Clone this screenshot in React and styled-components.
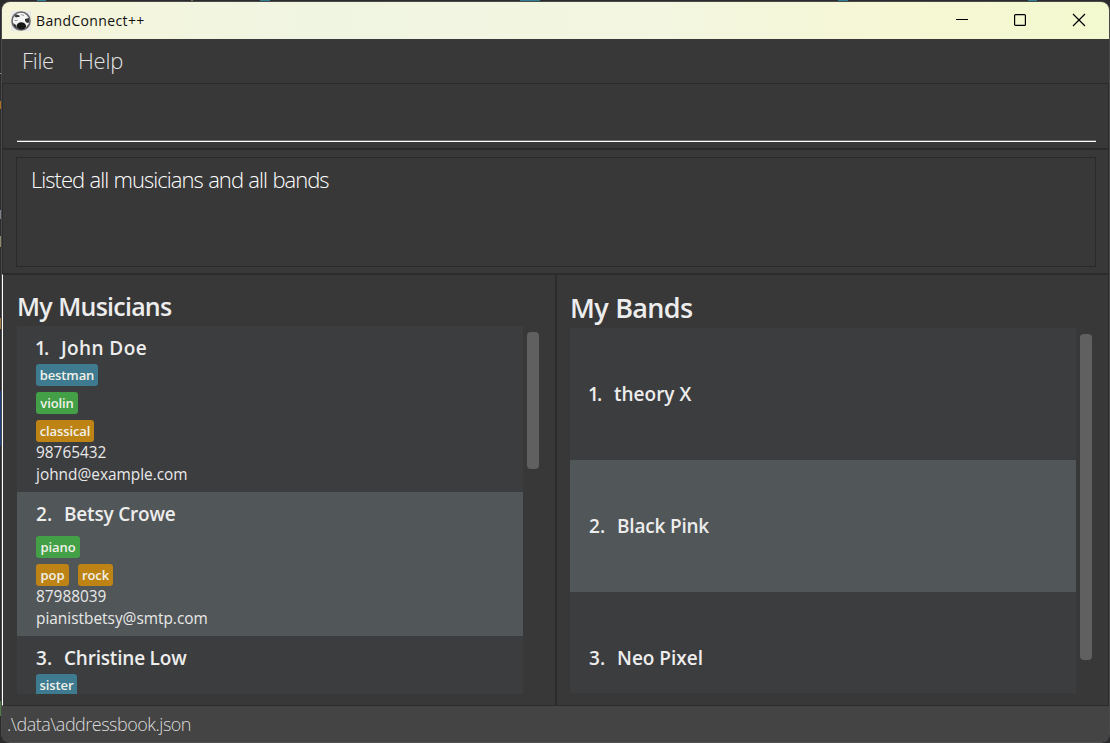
import React from "react";
import styled, { createGlobalStyle } from "styled-components";

const GlobalStyle = createGlobalStyle`
  * { box-sizing: border-box; }
  body { margin: 0; overflow: hidden; background: #2b2b2d; }
`;

const Desktop = styled.div`
  width: 1110px;
  height: 743px;
  padding: 1px 0 0 1px;
  font-family: "Open Sans", "Noto Sans", sans-serif;
  background:
    linear-gradient(#2f7f96, #2f7f96) 37px 0 / 9px 1px no-repeat,
    linear-gradient(#2f7f96, #2f7f96) 260px 0 / 10px 1px no-repeat,
    linear-gradient(#8a6a4c, #8a6a4c) 191px 0 / 2px 1px no-repeat,
    linear-gradient(#2f7f96, #2f7f96) 520px 0 / 20px 1px no-repeat,
    linear-gradient(#2f7f96, #2f7f96) 838px 0 / 10px 1px no-repeat,
    linear-gradient(#2f7f96, #2f7f96) 1028px 0 / 9px 1px no-repeat,
    linear-gradient(#8c97a5, #8c97a5) 0 73px / 2px 1px no-repeat,
    linear-gradient(#a87022, #a87022) 0 101px / 1px 8px no-repeat,
    linear-gradient(#7b8390, #7b8390) 0 210px / 1px 9px no-repeat,
    linear-gradient(#8f8a6a, #8f8a6a) 0 236px / 1px 11px no-repeat,
    linear-gradient(#a07a45, #a07a45) 0 318px / 1px 11px no-repeat,
    linear-gradient(#214283, #214283) 0 391px / 1px 55px no-repeat,
    linear-gradient(#4e7a44, #4e7a44) 0 701px / 1px 15px no-repeat,
    #2b2b2d;
`;

const Window = styled.div`
  width: 1109px;
  height: 742px;
  display: flex;
  flex-direction: column;
  overflow: hidden;
  border: 1px solid #4a4a4a;
  border-bottom-color: #505050;
  border-radius: 9px;
  background: #383838;
`;

const TitleBar = styled.header`
  height: 37px;
  flex: none;
  display: flex;
  align-items: center;
  padding: 0 1px 0 9px;
  background: linear-gradient(90deg, #f6f5da 0%, #f0f5e2 28%, #f3f6e0 60%, #f6f7d4 82%, #f3f9cf 100%);
`;

const AppTitle = styled.h1`
  flex: 1;
  margin: 0 0 0 5px;
  font-size: 14px;
  font-weight: 400;
  letter-spacing: ${(p) => p.$track}px;
  color: #111;
`;

const WindowButton = styled.span`
  width: 58.5px;
  height: 37px;
  padding-bottom: 1px;
  display: flex;
  align-items: center;
  justify-content: center;
`;

const MenuBar = styled.nav`
  height: 44px;
  flex: none;
  display: flex;
  gap: 24px;
  padding-left: 20px;
  line-height: 42px;
  font-size: 22px;
  font-weight: 300;
  color: #e4e4e4;
`;

const MenuItem = styled.span`
  width: ${(p) => p.$width}px;
  white-space: nowrap;
  letter-spacing: ${(p) => p.$track}px;
`;

const CommandArea = styled.section`
  height: 66px;
  flex: none;
  padding: 0 12px 6px 14px;
  display: flex;
  border: 1px solid #2b2b2b;
`;

const CommandInput = styled.div`
  flex: 1;
  border-bottom: 1px solid #fff;
  box-shadow: inset 0 -1px 0 #6c6c6c;
`;

const ResultArea = styled.section`
  height: 125px;
  flex: none;
  display: flex;
  padding: 7px 12px 6px 13px;
  border: 1px solid #2b2b2b;
`;

const ResultBox = styled.div`
  flex: 1;
  border: 1px solid #2a2a2a;
  padding: 6px 14px;
  font-size: 22px;
  line-height: 31px;
  font-weight: 300;
  letter-spacing: ${(p) => p.$track}px;
  word-spacing: 0.6px;
  color: #fff;
`;

const Panels = styled.main`
  flex: 1;
  min-height: 0;
  display: flex;
`;

const Panel = styled.section`
  width: ${(p) => p.$width}px;
  display: flex;
  flex-direction: column;
  border: 1px solid #2b2b2b;
  ${(p) => p.$accent && "border-left-color: #fff;"}
  padding: ${(p) => p.$padding};
`;

const PanelTitle = styled.h2`
  margin: 0;
  flex: none;
  height: ${(p) => p.$height}px;
  line-height: 34px;
  padding-top: ${(p) => p.$top}px;
  font-size: ${(p) => p.$size}px;
  font-weight: 600;
  letter-spacing: ${(p) => p.$track}px;
  word-spacing: 0.8px;
  color: #ededed;
`;

const ListArea = styled.div`
  flex: 1;
  min-height: 0;
  display: flex;
  gap: 3.5px;
`;

const List = styled.ul`
  width: 506px;
  margin: 0;
  padding: 0;
  list-style: none;
  overflow: hidden;
  background: #3c3d3f;
`;

const ScrollThumb = styled.div`
  width: 12.5px;
  height: ${(p) => p.$height}px;
  margin-top: 5.5px;
  border-radius: 4px;
  background: #606060;
`;

const MusicianRow = styled.li`
  height: ${(p) => p.$height}px;
  padding: 8px 0 0 19px;
  background: ${(p) => (p.$alt ? "#515658" : "#3c3d3f")};
  color: #e9e9e9;
`;

const BandRow = styled.li`
  height: 132px;
  display: flex;
  align-items: center;
  padding-left: 19px;
  background: ${(p) => (p.$alt ? "#515658" : "#3c3d3f")};
`;

const Name = styled.div`
  display: flex;
  height: 28px;
  line-height: 28px;
  font-size: 19px;
  font-weight: 600;
  letter-spacing: ${(p) => p.$track ?? 0}px;
  color: #ededed;
  white-space: nowrap;
`;

const Index = styled.span`
  width: ${(p) => p.$width}px;
  letter-spacing: ${(p) => (p.$width < 28 ? -2 : 0)}px;
  text-indent: ${(p) => (p.$width < 28 ? -1 : 0)}px;
`;

const Tags = styled.div`
  display: flex;
  gap: 9px;
  height: 22px;
  margin-top: ${(p) => p.$top}px;
`;

const tagColors = { tag: "#3e7b91", instrument: "#43a047", genre: "#bd8415" };

const Tag = styled.span`
  width: ${(p) => p.$width}px;
  text-align: center;
  line-height: 22px;
  font-size: 13px;
  font-weight: 600;
  letter-spacing: -0.1px;
  border-radius: 3px;
  background: ${(p) => tagColors[p.$kind]};
  color: #f1f1e8;
`;

const Contacts = styled.div`
  line-height: 22px;
  font-size: 15.4px;
`;

const StatusBar = styled.footer`
  height: 36px;
  flex: none;
  padding-left: 5px;
  line-height: 37px;
  font-size: 18px;
  font-weight: 300;
  letter-spacing: ${(p) => p.$track}px;
  color: #dcdcdc;
  background: #444;
`;

const musicians = [
  {
    name: "John Doe", indexWidth: 25, track: 0.4, height: 166,
    tags: [
      [2, [["tag", "bestman", 62]]],
      [6, [["instrument", "violin", 42]]],
      [6, [["genre", "classical", 58]]],
    ],
    phone: "98765432", email: "johnd@example.com",
  },
  {
    name: "Betsy Crowe", indexWidth: 28, track: -0.2, height: 144,
    tags: [
      [8, [["instrument", "piano", 44]]],
      [6, [["genre", "pop", 33], ["genre", "rock", 35]]],
    ],
    phone: "87988039", email: "pianistbetsy@smtp.com",
  },
  {
    name: "Christine Low", indexWidth: 28, track: -0.2, height: 166,
    tags: [[2, [["tag", "sister", 41]]]],
  },
];

const bands = [
  { name: "theory X", indexWidth: 25, track: 0 },
  { name: "Black Pink", indexWidth: 28, track: -0.2 },
  { name: "Neo Pixel", indexWidth: 28, track: 0 },
];

function AppIcon() {
  return (
    <svg width="20" height="20" viewBox="0 0 20 20">
      <rect width="20" height="20" fill="#e9e9e9" />
      <circle cx="10" cy="10" r="9" fill="#f4f4f4" stroke="#666" strokeWidth="1.6" />
      <path d="M3.500 5 5 3.500l3.500 1v1.500l-2 0L5 6.500ZM14 8l4-1v4.500l-2 .5-2-2ZM2 12l3 2 1 4-3-3ZM17.500 13l-1 3-1.500 1Z" fill="#333" />
      <ellipse cx="10.3" cy="15" rx="4.8" ry="3.7" fill="#171717" />
      <path d="M3.500 9.500h3M10 3.500l3 1" stroke="#999" />
    </svg>
  );
}

export default function App() {
  return (
    <Desktop>
      <GlobalStyle />
      <Window>
        <TitleBar>
          <AppIcon />
          <AppTitle $track={0.36}>BandConnect++</AppTitle>
          <WindowButton>
            <svg width="14" height="14"><path d="M1 6.500h12" stroke="#000" /></svg>
          </WindowButton>
          <WindowButton>
            <svg width="14" height="14"><rect x="1.6" y="1.6" width="10.8" height="10.8" rx="1" fill="none" stroke="#000" strokeWidth="1.2" /></svg>
          </WindowButton>
          <WindowButton>
            <svg width="14" height="14"><path d="m1 1 12 12M13 1 1 13" stroke="#000" strokeWidth="1.2" /></svg>
          </WindowButton>
        </TitleBar>
        <MenuBar>
          <MenuItem $width={32} $track={-0.3}>File</MenuItem>
          <MenuItem $width={46} $track={-0.25}>Help</MenuItem>
        </MenuBar>
        <CommandArea><CommandInput /></CommandArea>
        <ResultArea>
          <ResultBox $track={-0.97}>Listed all musicians and all bands</ResultBox>
        </ResultArea>
        <Panels>
          <Panel $width={554} $accent $padding="0 0 11px 14px">
            <PanelTitle $height={51} $top={14} $size={25} $track={-0.78}>My Musicians</PanelTitle>
            <ListArea>
              <List>
                {musicians.map((m, i) => (
                  <MusicianRow key={m.name} $height={m.height} $alt={i % 2 === 1}>
                    <Name $track={m.track}><Index $width={m.indexWidth}>{i + 1}.</Index>{m.name}</Name>
                    {m.tags.map(([top, tags], row) => (
                      <Tags key={row} $top={top}>
                        {tags.map(([kind, label, width]) => (
                          <Tag key={label} $kind={kind} $width={width}>{label}</Tag>
                        ))}
                      </Tags>
                    ))}
                    <Contacts>
                      <div>{m.phone}</div>
                      <div>{m.email}</div>
                    </Contacts>
                  </MusicianRow>
                ))}
              </List>
              <ScrollThumb $height={137.5} />
            </ListArea>
          </Panel>
          <Panel $width={553} $padding="0 0 12px 13px">
            <PanelTitle $height={53} $top={16} $size={27} $track={-0.65}>My Bands</PanelTitle>
            <ListArea>
              <List>
                {bands.map((band, i) => (
                  <BandRow key={band.name} $alt={i % 2 === 1}>
                    <Name $track={band.track}>
                      <Index $width={band.indexWidth}>{i + 1}.</Index>{band.name}
                    </Name>
                  </BandRow>
                ))}
              </List>
              <ScrollThumb $height={326} />
            </ListArea>
          </Panel>
        </Panels>
        <StatusBar $track={-0.5}>.\data\addressbook.json</StatusBar>
      </Window>
    </Desktop>
  );
}
